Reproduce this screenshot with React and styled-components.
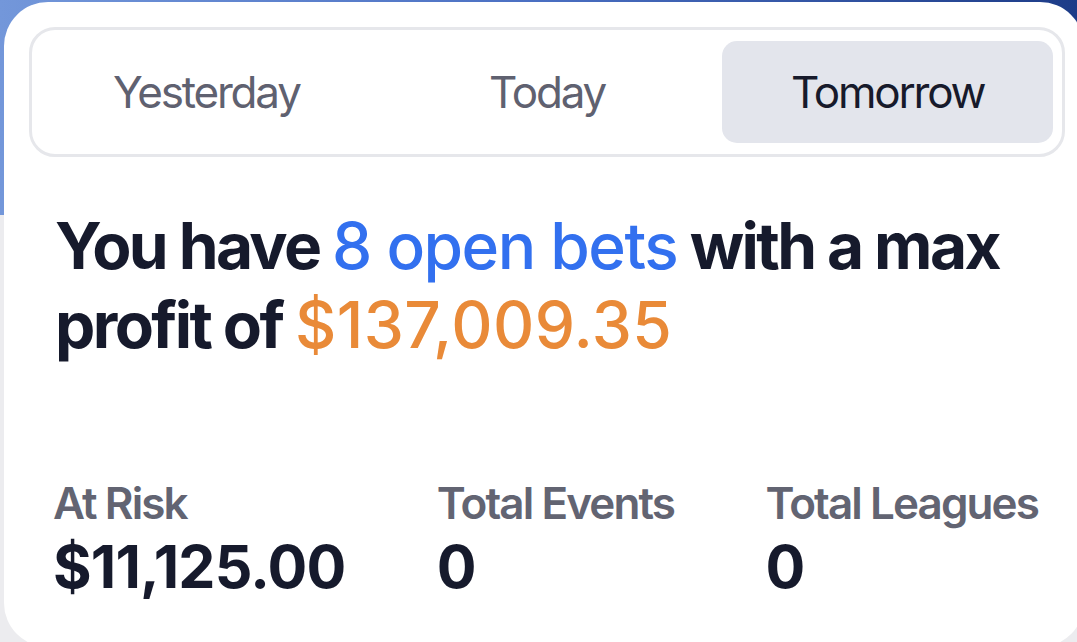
import React, { useState } from "react";
import styled, { createGlobalStyle } from "styled-components";

const GlobalStyle = createGlobalStyle`
  html, body {
    margin: 0;
    padding: 0;
    overflow: hidden;
  }
  body {
    font-family: Inter, "Noto Sans", "Liberation Sans", sans-serif;
    background:
      linear-gradient(90deg, #7397da 0%, #4a6fc2 50%, #1d3c88 100%) top / 100% 215px no-repeat,
      #ececef;
  }
`;

const days = ["Yesterday", "Today", "Tomorrow"];

const stats = [
  { label: "At Risk", value: "$11,125.00" },
  { label: "Total Events", value: "0" },
  { label: "Total Leagues", value: "0" },
];

const App = () => {
  const [active, setActive] = useState("Tomorrow");

  return (
    <Page>
      <GlobalStyle />
      <Card>
        <Tabs>
          {days.map((day) => (
            <Tab key={day} $active={active === day} onClick={() => setActive(day)}>
              {day}
            </Tab>
          ))}
        </Tabs>

        <Headline>
          You have <Blue>8 open bets</Blue> with a max profit of{" "}
          <Orange>$137,009.35</Orange>
        </Headline>

        <StatsRow>
          {stats.map((s) => (
            <Stat key={s.label}>
              <StatLabel>{s.label}</StatLabel>
              <StatValue>{s.value}</StatValue>
            </Stat>
          ))}
        </StatsRow>
      </Card>
    </Page>
  );
};

const Page = styled.div`
  width: 1077px;
  height: 642px;
  overflow: hidden;
  padding: 2px 0 0 4px;
  box-sizing: border-box;
`;

const Card = styled.div`
  width: 1080px;
  height: 645px;
  box-sizing: border-box;
  background: #ffffff;
  border-radius: 44px;
  padding: 25px 0 0 25px;
`;

const Tabs = styled.div`
  width: 1036px;
  height: 130px;
  box-sizing: border-box;
  border: 3px solid #e6e7eb;
  border-radius: 26px;
  padding: 11px 9px;
  display: grid;
  grid-template-columns: repeat(3, 1fr);
  gap: 10px;
`;

const Tab = styled.button`
  border: none;
  border-radius: 15px;
  background: ${(p) => (p.$active ? "#e3e5ec" : "transparent")};
  color: ${(p) => (p.$active ? "#171a2b" : "#5f6170")};
  font-family: inherit;
  font-size: 44px;
  font-weight: 400;
  letter-spacing: -2.2px;
  cursor: pointer;
  display: flex;
  align-items: center;
  justify-content: center;
  padding: 0;
`;

const Headline = styled.h1`
  margin: 49px 0 0 26px;
  width: 990px;
  font-size: 64px;
  line-height: 79px;
  font-weight: 700;
  letter-spacing: -2.6px;
  color: #161a2c;
`;

const Blue = styled.span`
  color: #3270ef;
  font-weight: 500;
  letter-spacing: -1.5px;
`;

const Orange = styled.span`
  color: #e98a38;
  font-weight: 500;
  letter-spacing: 0.4px;
`;

const StatsRow = styled.div`
  margin: 113px 0 0 24px;
  width: 985px;
  display: flex;
  justify-content: space-between;
`;

const Stat = styled.div`
  display: flex;
  flex-direction: column;
`;

const StatLabel = styled.div`
  font-size: 44px;
  line-height: 53px;
  font-weight: 600;
  letter-spacing: -1.9px;
  color: #626472;
`;

const StatValue = styled.div`
  font-size: 59px;
  line-height: 70px;
  font-weight: 700;
  letter-spacing: -0.8px;
  color: #161a2c;
  margin-top: 2px;
`;

export default App;
